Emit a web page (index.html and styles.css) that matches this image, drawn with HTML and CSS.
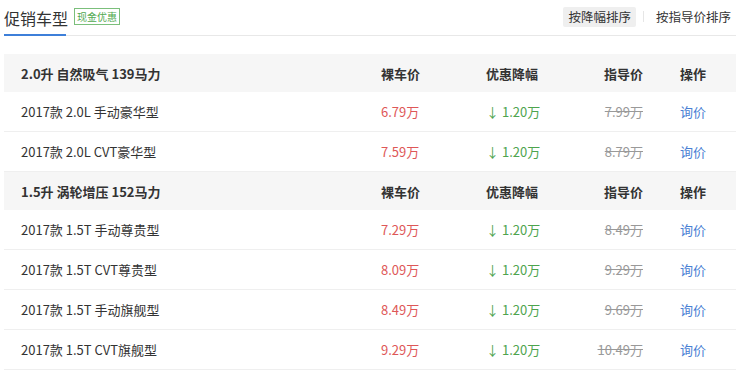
FILE: index.html
```html
<!DOCTYPE html>
<html lang="zh-CN">
<head>
    <meta charset="UTF-8">
    <title>促销车型</title>
    <link rel="stylesheet" href="styles.css">
</head>
<body>
    <div class="promo">
        <!-- 标题栏 -->
        <div class="promo-head">
            <div class="tab-title">促销车型</div>
            <span class="tag">现金优惠</span>
            <div class="sort-group">
                <span class="sort-btn active">按降幅排序</span>
                <span class="sort-sep"></span>
                <span class="sort-btn">按指导价排序</span>
            </div>
        </div>

        <div class="price-table">
            <div class="row group">
                <div class="c-name">2.0升 自然吸气 139马力</div>
                <div class="c-price">裸车价</div>
                <div class="c-cut">优惠降幅</div>
                <div class="c-guide">指导价</div>
                <div class="c-op">操作</div>
            </div>
            <div class="row">
                <div class="c-name">2017款 2.0L 手动豪华型</div>
                <div class="c-price red">6.79万</div>
                <div class="c-cut green">↓ 1.20万</div>
                <div class="c-guide del">7.99万</div>
                <div class="c-op"><a href="#" class="link">询价</a></div>
            </div>
            <div class="row">
                <div class="c-name">2017款 2.0L CVT豪华型</div>
                <div class="c-price red">7.59万</div>
                <div class="c-cut green">↓ 1.20万</div>
                <div class="c-guide del">8.79万</div>
                <div class="c-op"><a href="#" class="link">询价</a></div>
            </div>

            <div class="row group">
                <div class="c-name">1.5升 涡轮增压 152马力</div>
                <div class="c-price">裸车价</div>
                <div class="c-cut">优惠降幅</div>
                <div class="c-guide">指导价</div>
                <div class="c-op">操作</div>
            </div>
            <div class="row">
                <div class="c-name">2017款 1.5T 手动尊贵型</div>
                <div class="c-price red">7.29万</div>
                <div class="c-cut green">↓ 1.20万</div>
                <div class="c-guide del">8.49万</div>
                <div class="c-op"><a href="#" class="link">询价</a></div>
            </div>
            <div class="row">
                <div class="c-name">2017款 1.5T CVT尊贵型</div>
                <div class="c-price red">8.09万</div>
                <div class="c-cut green">↓ 1.20万</div>
                <div class="c-guide del">9.29万</div>
                <div class="c-op"><a href="#" class="link">询价</a></div>
            </div>
            <div class="row">
                <div class="c-name">2017款 1.5T 手动旗舰型</div>
                <div class="c-price red">8.49万</div>
                <div class="c-cut green">↓ 1.20万</div>
                <div class="c-guide del">9.69万</div>
                <div class="c-op"><a href="#" class="link">询价</a></div>
            </div>
            <div class="row">
                <div class="c-name">2017款 1.5T CVT旗舰型</div>
                <div class="c-price red">9.29万</div>
                <div class="c-cut green">↓ 1.20万</div>
                <div class="c-guide del">10.49万</div>
                <div class="c-op"><a href="#" class="link">询价</a></div>
            </div>
        </div>
    </div>
</body>
</html>
```

FILE: styles.css
```css
body {
    margin: 0;
    padding: 0;
    background-color: #ffffff;
    color: #333333;
    font-family: "Noto Sans CJK SC", "Noto Sans", sans-serif;
}

.promo {
    width: 732px;
    margin-left: 4px;
}

.promo-head {
    display: flex;
    align-items: center;
    height: 35px;
    border-bottom: 1px solid #e8e8e8;
    position: relative;
}

.tab-title {
    height: 35px;
    line-height: 34px;
    font-size: 16px;
    color: #333;
    border-bottom: 2px solid #3d7fd9;
    box-sizing: border-box;
    width: 62px;
    margin-bottom: -1px;
    white-space: nowrap;
}

.tag {
    margin-left: 8px;
    padding: 0 2px;
    border: 1px solid #7bbf7b;
    color: #4fa94f;
    font-size: 10px;
    line-height: 15px;
    margin-top: -2px;
}

.sort-group {
    margin-left: auto;
    display: flex;
    align-items: center;
    margin-top: -2px;
}

.sort-btn {
    font-size: 12.5px;
    color: #333;
    padding: 0 5px;
    line-height: 20px;
}

.sort-btn.active {
    background-color: #efefef;
    border-radius: 2px;
}

.sort-sep {
    width: 1px;
    height: 11px;
    background-color: #e6e6e6;
    margin: 0 7px;
}

.price-table {
    margin-top: 18px;
}

.row {
    display: grid;
    grid-template-columns: 377px 105px 74px 83px 93px;
    height: 40px;
    align-items: center;
    font-size: 13px;
    border-bottom: 1px solid #efefef;
    box-sizing: border-box;
}

.row.group {
    height: 38px;
    background-color: #f6f6f6;
    font-weight: bold;
    border-bottom: none;
}

.c-name {
    padding-left: 17px;
    white-space: nowrap;
}

.c-guide {
    text-align: right;
    white-space: nowrap;
}

.c-op {
    padding-left: 37px;
}

.c-cut {
    white-space: nowrap;
}

.red {
    color: #de5757;
}

.green {
    color: #4ea44e;
}

.del {
    color: #999;
    text-decoration: line-through;
}

.link {
    color: #4a80d4;
    text-decoration: none;
}
```
